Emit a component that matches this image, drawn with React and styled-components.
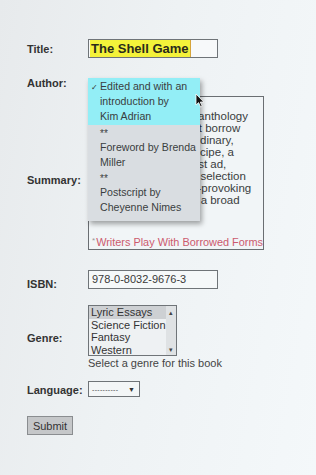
import styled, { createGlobalStyle } from 'styled-components';

const GlobalStyle = createGlobalStyle`
  html, body {
    margin: 0;
    padding: 0;
  }
  body {
    font-family: "Liberation Sans", Arial, sans-serif;
    background: linear-gradient(100deg, #e7eaec 0%, #eef2f4 45%, #f4f8fa 100%);
    min-height: 475px;
    color: #333;
  }
`;

const summaryLines = [
  'An innovative, novel anthology',
  'of shorter essays that borrow',
  'all the forms of the ordinary,',
  'the mundane\u2014the recipe, a',
  'the field guide, the lost ad,',
  'and the invoice. This selection',
  'of smart and thought-provoking',
  'lyrical essays covers a broad',
  'range of subjects.',
];

const authorOptions = [
  { text: 'Edited and with an\nintroduction by\nKim Adrian', active: true },
  { text: '**', small: true },
  { text: 'Foreword by Brenda\nMiller' },
  { text: '**', small: true },
  { text: 'Postscript by\nCheyenne Nimes' },
];

const genres = ['Lyric Essays', 'Science Fiction', 'Fantasy', 'Western'];

export default function App() {
  return (
    <Page>
      <GlobalStyle />
      <Form>
        <Row $gap={0}>
          <Label>Title:</Label>
          <TitleInput>
            <Highlight>The Shell Game</Highlight>
          </TitleInput>
        </Row>

        <Row $gap={18}>
          <Label>Author:</Label>
          <Field>
            <Popup>
              {authorOptions.map((opt, i) => (
                <Option key={i} $active={opt.active} $small={opt.small}>
                  {opt.active && <Check>✓</Check>}
                  {opt.text}
                </Option>
              ))}
              <Cursor viewBox="0 0 10 15" width="10" height="15">
                <path
                  d="M1 1 L1 12 L3.6 9.6 L5.6 14 L7.2 13.3 L5.3 9 L8.8 9 Z"
                  fill="#111"
                  stroke="#fff"
                  strokeWidth="0.8"
                />
              </Cursor>
            </Popup>
          </Field>
        </Row>

        <Row $gap={6}>
          <Label $shift={7}>Summary:</Label>
          <Summary>
            <SummaryText>{summaryLines.join('\n')}</SummaryText>
            <Series>
              <Star>*</Star>Writers Play With Borrowed Forms
            </Series>
          </Summary>
        </Row>

        <Row $gap={20}>
          <Label $shift={4}>ISBN:</Label>
          <TextInput>978-0-8032-9676-3</TextInput>
        </Row>

        <Row $gap={16}>
          <Label>Genre:</Label>
          <Field>
            <ListBox>
              <ListItems>
                {genres.map((g, i) => (
                  <ListItem key={g} $selected={i === 0}>
                    {g}
                  </ListItem>
                ))}
              </ListItems>
              <ScrollBar>
                <span>▴</span>
                <span>▾</span>
              </ScrollBar>
            </ListBox>
            <Help>Select a genre for this book</Help>
          </Field>
        </Row>

        <Row $gap={11}>
          <Label $shift={1}>Language:</Label>
          <Select>
            <Dashes>----------</Dashes>
            <Arrow>▼</Arrow>
          </Select>
        </Row>

        <Submit>Submit</Submit>
      </Form>
    </Page>
  );
}

const Page = styled.div`
  padding: 39px 0 0 27px;
  min-height: 475px;
  box-sizing: border-box;
`;

const Form = styled.div`
  display: flex;
  flex-direction: column;
`;

const Row = styled.div`
  display: grid;
  grid-template-columns: 61px auto;
  align-items: center;
  margin-top: ${(p) => p.$gap}px;
`;

const Label = styled.label`
  font-size: 11px;
  font-weight: bold;
  color: #333;
  line-height: 14px;
  margin-top: ${(p) => p.$shift || 0}px;
  margin-bottom: ${(p) => -(p.$shift || 0)}px;
`;

const Field = styled.div`
  position: relative;
  min-height: 14px;
  display: flex;
  flex-direction: column;
`;

const TitleInput = styled.div`
  width: 130px;
  height: 19px;
  box-sizing: border-box;
  border: 1px solid #6f7478;
  background: #f7f9fa;
  padding: 0 0 0 1px;
  display: flex;
  align-items: stretch;
`;

const Highlight = styled.span`
  background: #f4f23a;
  border-right: 1px solid #d6a43a;
  font-size: 13px;
  font-weight: bold;
  color: #2a2a1a;
  line-height: 17px;
  padding: 0 1px;
`;

const Popup = styled.div`
  position: absolute;
  left: 0;
  top: 2px;
  width: 112px;
  background: #d9dde1;
  box-shadow: 2px 3px 5px rgba(0, 0, 0, 0.35);
  z-index: 2;
  padding-bottom: 6px;
`;

const Option = styled.div`
  position: relative;
  white-space: pre;
  font-size: 10.6px;
  line-height: 15px;
  color: #3a3d40;
  padding: ${(p) => (p.$active ? '1px 0 1px 12px' : '0 0 0 12px')};
  background: ${(p) => (p.$active ? '#93eef6' : 'transparent')};
  ${(p) => p.$small && 'line-height: 13px; font-size: 10px; padding-top: 2px;'}
`;

const Check = styled.span`
  position: absolute;
  left: 3px;
  top: 2px;
  font-size: 8px;
  color: #333;
`;

const Cursor = styled.svg`
  position: absolute;
  left: 107px;
  top: 15px;
`;

const Summary = styled.div`
  width: 176px;
  height: 154px;
  box-sizing: border-box;
  border: 1px solid #6a6e72;
  background: #f1f5f7;
  padding: 13px 0 1px 3px;
  display: flex;
  flex-direction: column;
  overflow: hidden;
`;

const SummaryText = styled.div`
  white-space: pre;
  font-size: 11.5px;
  line-height: 12px;
  color: #3a3d40;
`;

const Series = styled.div`
  margin-top: auto;
  font-size: 10.9px;
  color: #cc5a6e;
  white-space: nowrap;
`;

const Star = styled.span`
  color: #999;
  font-size: 8px;
  vertical-align: top;
  margin-right: 1px;
`;

const TextInput = styled.div`
  width: 130px;
  height: 19px;
  box-sizing: border-box;
  border: 1px solid #6f7478;
  background: #f5f8f9;
  font-size: 11px;
  color: #3a3a3a;
  line-height: 17px;
  padding-left: 3px;
`;

const ListBox = styled.div`
  width: 89px;
  height: 51px;
  box-sizing: border-box;
  border: 1px solid #6f7478;
  background: #eef1f3;
  display: flex;
  overflow: hidden;
`;

const ListItems = styled.div`
  flex: 1;
`;

const ListItem = styled.div`
  font-size: 11px;
  line-height: 12.5px;
  color: #333;
  padding-left: 2px;
  white-space: nowrap;
  background: ${(p) => (p.$selected ? '#cdd0d3' : 'transparent')};
`;

const ScrollBar = styled.div`
  width: 12px;
  background: #dfe2e4;
  display: flex;
  flex-direction: column;
  justify-content: space-between;
  align-items: center;
  font-size: 7px;
  color: #444;
  padding: 3px 0 1px;
`;

const Help = styled.div`
  font-size: 11px;
  color: #444;
  margin-top: 1px;
  line-height: 13px;
`;

const Select = styled.div`
  width: 52px;
  height: 16px;
  box-sizing: border-box;
  border: 1px solid #6f7478;
  background: #f3f6f7;
  display: flex;
  align-items: center;
  justify-content: space-between;
  padding: 0 4px 0 3px;
`;

const Dashes = styled.span`
  font-size: 7px;
  color: #444;
  letter-spacing: 0.3px;
`;

const Arrow = styled.span`
  font-size: 7px;
  color: #333;
`;

const Submit = styled.button`
  margin-top: 19px;
  width: 46px;
  height: 19px;
  padding: 0;
  background: #c5c7c9;
  border: 1px solid #8a8d90;
  font-family: "Liberation Sans", Arial, sans-serif;
  font-size: 11px;
  color: #333;
`;
